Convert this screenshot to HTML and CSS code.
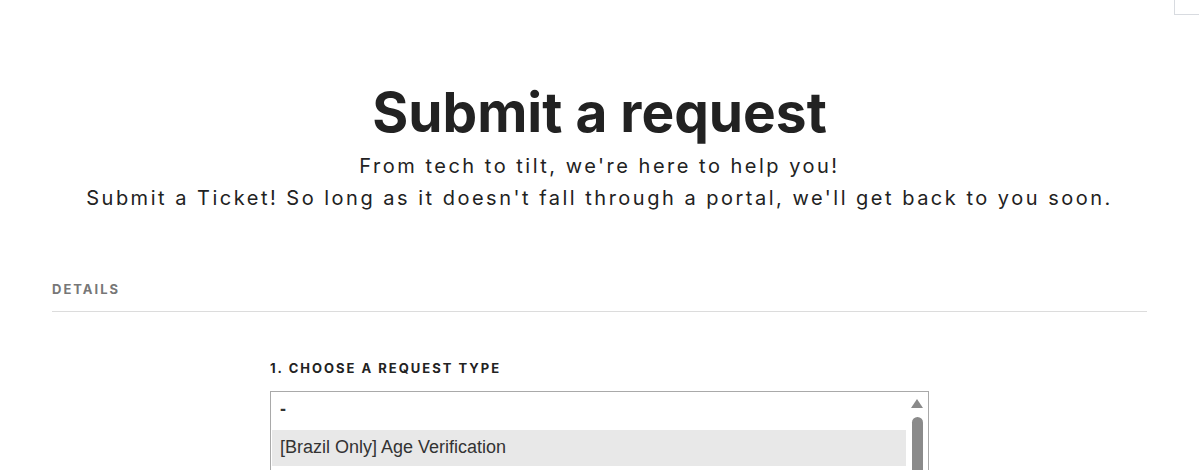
FILE: index.html
```html
<!DOCTYPE html>
<html lang="en">
<head>
<meta charset="utf-8">
<title>Submit a request</title>
<link rel="stylesheet" href="styles.css">
</head>
<body>
<div class="corner"></div>
<main class="page">
  <header class="hero">
    <h1 class="title">Submit a request</h1>
    <p class="lead">From tech to tilt, we're here to help you!<br>Submit a Ticket! So long as it doesn't fall through a portal, we'll get back to you soon.</p>
  </header>
  <section class="details">
    <h2 class="section-label">Details</h2>
    <div class="form">
      <label class="field-label">1. Choose a request type</label>
      <div class="listbox">
        <ul class="options">
          <li class="option">-</li>
          <li class="option selected">[Brazil Only] Age Verification</li>
        </ul>
        <div class="scrollbar">
          <span class="arrow"></span>
          <span class="thumb"></span>
        </div>
      </div>
    </div>
  </section>
</main>
</body>
</html>
```
FILE: styles.css
```css
* { box-sizing: border-box; }
html, body { margin: 0; padding: 0; background: #fff; overflow: hidden; }
body { font-family: Inter, "Noto Sans", sans-serif; color: #222; height: 470px; position: relative; }

.corner {
  position: absolute;
  top: 0;
  left: 1174px;
  width: 25px;
  height: 15px;
  border-left: 1px solid #d8dbe0;
  border-bottom: 1px solid #d8dbe0;
}

.page {
  width: 1095px;
  margin: 0 auto;
  padding-top: 79px;
}

.hero { text-align: center; }
.title {
  margin: 0;
  font-size: 55px;
  font-weight: 700;
  line-height: 66px;
  color: #222;
}
.lead {
  margin: 5px 0 0;
  font-size: 20px;
  line-height: 32px;
  letter-spacing: 2.5px;
  color: #222;
}

.details { margin-top: 67px; }
.section-label {
  margin: 0;
  padding-bottom: 14px;
  border-bottom: 1px solid #dcdcdc;
  font-size: 13px;
  font-weight: 700;
  line-height: 16px;
  letter-spacing: 2px;
  text-transform: uppercase;
  color: #777;
}

.form {
  width: 659px;
  margin: 48px auto 0;
}
.field-label {
  display: block;
  font-size: 13px;
  font-weight: 700;
  line-height: 16px;
  letter-spacing: 2px;
  text-transform: uppercase;
  color: #222;
}

.listbox {
  margin-top: 15px;
  display: flex;
  border: 1px solid #a9a9a9;
  height: 120px;
  background: #fff;
}
.options {
  list-style: none;
  margin: 0;
  padding: 0 0 0 1px;
  flex: 1;
  font-family: "Liberation Sans", Arial, sans-serif;
  font-size: 18px;
  color: #333;
}
.option {
  height: 38px;
  line-height: 34px;
  padding: 0 8px;
}
.option:first-child { font-weight: 700; }
.option.selected { background: #e8e8e8; height: 36px; }

.scrollbar {
  width: 22px;
  display: flex;
  flex-direction: column;
  align-items: center;
  padding-top: 7px;
}
.arrow {
  width: 0;
  height: 0;
  border-left: 6px solid transparent;
  border-right: 6px solid transparent;
  border-bottom: 9px solid #8a8a8a;
}
.thumb {
  margin-top: 9px;
  width: 11px;
  flex: 1;
  background: #8a8a8a;
  border-radius: 6px 6px 0 0;
}
```
